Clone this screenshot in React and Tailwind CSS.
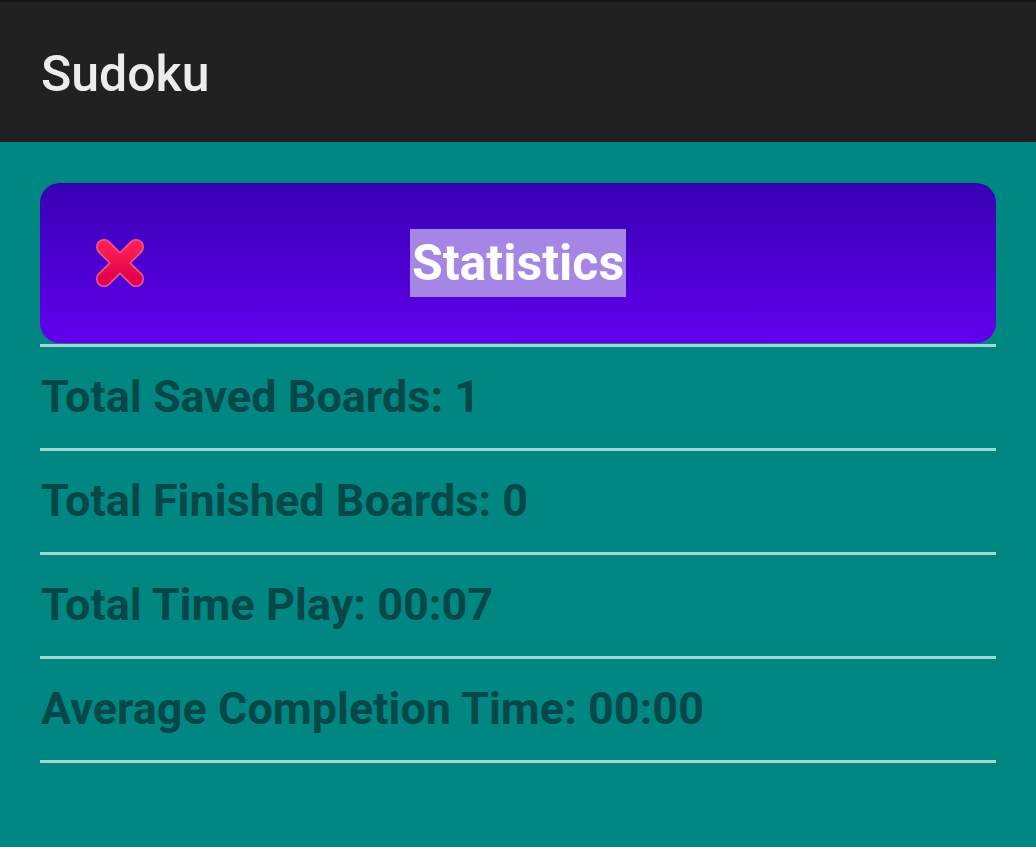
import React from 'react';

const stats = [
  { label: 'Total Saved Boards', value: '1' },
  { label: 'Total Finished Boards', value: '0' },
  { label: 'Total Time Play', value: '00:07' },
  { label: 'Average Completion Time', value: '00:00' },
];

const CloseIcon = () => (
  <svg width="54" height="54" viewBox="0 0 54 54">
    <defs>
      <linearGradient id="xg" x1="0" y1="0" x2="0" y2="1">
        <stop offset="0" stopColor="#ff1f55" />
        <stop offset="1" stopColor="#e0004a" />
      </linearGradient>
    </defs>
    <g stroke="#f0588a" strokeWidth="16" strokeLinecap="round">
      <line x1="11" y1="11" x2="43" y2="43" />
      <line x1="43" y1="11" x2="11" y2="43" />
    </g>
    <g stroke="url(#xg)" strokeWidth="13" strokeLinecap="round">
      <line x1="11" y1="11" x2="43" y2="43" />
      <line x1="43" y1="11" x2="11" y2="43" />
    </g>
  </svg>
);

export default function App() {
  return (
    <div
      className="w-[1036px] h-[847px] bg-[#008782] flex flex-col"
      style={{ fontFamily: 'Roboto, "Noto Sans", sans-serif' }}
    >
      {/* toolbar */}
      <div className="h-[142px] bg-[#212121] border-t-2 border-[#151515] flex items-center px-[41px] shrink-0">
        <span className="text-[50px] font-medium text-[#ececec] leading-none mt-[4px]">
          Sudoku
        </span>
      </div>

      <div className="px-10 pt-[41px]">
        {/* header card */}
        <div className="h-[160px] rounded-[20px] bg-gradient-to-b from-[#3700b3] to-[#6200ee] grid grid-cols-[1fr_auto_1fr] items-center">
          <div className="pl-[53px] flex items-center">
            <CloseIcon />
          </div>
          <span className="bg-[#a686e4] text-white text-[50px] font-bold leading-[68px] px-[2px]">
            Statistics
          </span>
          <div />
        </div>

        {/* stats list */}
        <div className="border-t-[3px] border-[#a3d6d3] mt-[1px]">
          {stats.map((s) => (
            <div
              key={s.label}
              className="h-[104px] border-b-[3px] border-[#a3d6d3] flex items-center"
            >
              <span className="text-[45px] font-bold text-[#06484a] leading-none pl-[1px] -mt-[2px]">
                {s.label}: {s.value}
              </span>
            </div>
          ))}
        </div>
      </div>
    </div>
  );
}
